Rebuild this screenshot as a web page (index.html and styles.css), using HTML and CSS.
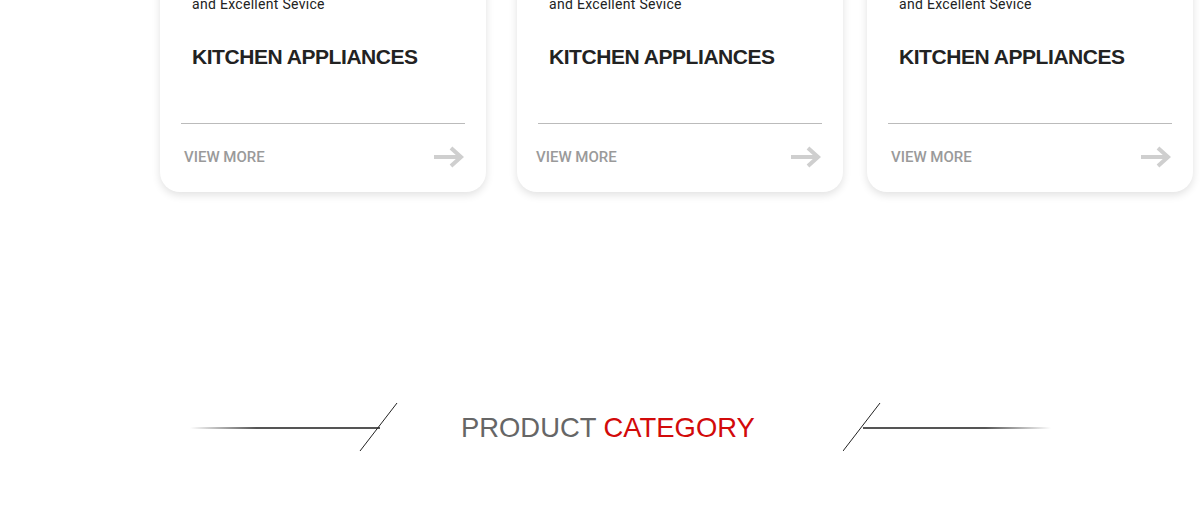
FILE: index.html
```html
<!DOCTYPE html>
<html lang="en">
<head>
    <meta charset="UTF-8">
    <title>Products</title>
    <link rel="stylesheet" href="styles.css">
</head>
<body>
    <div class="cards">
        <div class="card">
            <p class="desc">High Quality Products<br>and Excellent Sevice</p>
            <h3>KITCHEN APPLIANCES</h3>
            <div class="more">
                <span>VIEW MORE</span>
                <svg width="32" height="22" viewBox="0 0 32 22"><path d="M1 11H28M18 2L28 11L18 20" fill="none" stroke="#cfcfcf" stroke-width="4"/></svg>
            </div>
        </div>
        <div class="card">
            <p class="desc">High Quality Products<br>and Excellent Sevice</p>
            <h3>KITCHEN APPLIANCES</h3>
            <div class="more">
                <span>VIEW MORE</span>
                <svg width="32" height="22" viewBox="0 0 32 22"><path d="M1 11H28M18 2L28 11L18 20" fill="none" stroke="#cfcfcf" stroke-width="4"/></svg>
            </div>
        </div>
        <div class="card">
            <p class="desc">High Quality Products<br>and Excellent Sevice</p>
            <h3>KITCHEN APPLIANCES</h3>
            <div class="more">
                <span>VIEW MORE</span>
                <svg width="32" height="22" viewBox="0 0 32 22"><path d="M1 11H28M18 2L28 11L18 20" fill="none" stroke="#cfcfcf" stroke-width="4"/></svg>
            </div>
        </div>
    </div>

    <div class="title-row">
        <svg class="deco" width="210" height="50" viewBox="0 0 210 50">
            <defs>
                <linearGradient id="fadeL" x1="0" x2="1" y1="0" y2="0">
                    <stop offset="0" stop-color="#555" stop-opacity="0"/>
                    <stop offset="0.35" stop-color="#555" stop-opacity="1"/>
                    <stop offset="1" stop-color="#555"/>
                </linearGradient>
            </defs>
            <rect x="0" y="24" width="190" height="2" fill="url(#fadeL)"/>
            <line x1="207" y1="0" x2="170" y2="48" stroke="#222" stroke-width="1"/>
        </svg>
        <h2><span class="gray">PRODUCT</span> <span class="red">CATEGORY</span></h2>
        <svg class="deco" width="210" height="50" viewBox="0 0 210 50">
            <defs>
                <linearGradient id="fadeR" x1="0" x2="1" y1="0" y2="0">
                    <stop offset="0" stop-color="#555"/>
                    <stop offset="0.65" stop-color="#555" stop-opacity="1"/>
                    <stop offset="1" stop-color="#555" stop-opacity="0"/>
                </linearGradient>
            </defs>
            <rect x="20" y="24" width="188" height="2" fill="url(#fadeR)"/>
            <line x1="37" y1="0" x2="0" y2="48" stroke="#222" stroke-width="1"/>
        </svg>
    </div>
</body>
</html>
```

FILE: styles.css
```css
body{
    margin:0;
    background:#fff;
    font-family:"Liberation Sans", Arial, sans-serif;
}
p,h2,h3{
    margin:0;
}
.cards{
    display:flex;
    margin-top:-26px;
    padding-left:160px;
}
.card{
    width:326px;
    box-sizing:border-box;
    background:#fff;
    border-radius:0 0 20px 20px;
    box-shadow:0 3px 8px rgba(0,0,0,0.12);
    padding:6px 21px 0 21px;
}
.card+.card{
    margin-left:31px;
}
.card:last-child{
    margin-left:24px;
}
.desc{
    padding-left:11px;
    font-family:Roboto, "Liberation Sans", sans-serif;
    font-size:14px;
    line-height:16px;
    letter-spacing:0.3px;
    color:#222;
}
.card h3{
    margin-top:32px;
    padding-left:11px;
    padding-bottom:53px;
    border-bottom:1px solid #bbb;
    font-size:21px;
    line-height:26px;
    letter-spacing:-0.45px;
    color:#222;
}
.more{
    display:flex;
    justify-content:space-between;
    align-items:center;
    height:66px;
    padding-left:3px;
    padding-bottom:2px;
}
.more span{
    font-family:Roboto, "Liberation Sans", sans-serif;
    font-size:15px;
    font-weight:500;
    color:#9a9a9a;
}
.card:nth-child(2) .more span{
    margin-left:-5px;
}
.title-row{
    display:flex;
    align-items:center;
    margin-top:211px;
    padding-left:190px;
}
.title-row h2{
    margin:0 88px 0 61px;
    font-size:27.4px;
    font-weight:normal;
    line-height:50px;
    white-space:nowrap;
}
.gray{
    color:#666;
}
.red{
    color:#d20a0a;
}
```
